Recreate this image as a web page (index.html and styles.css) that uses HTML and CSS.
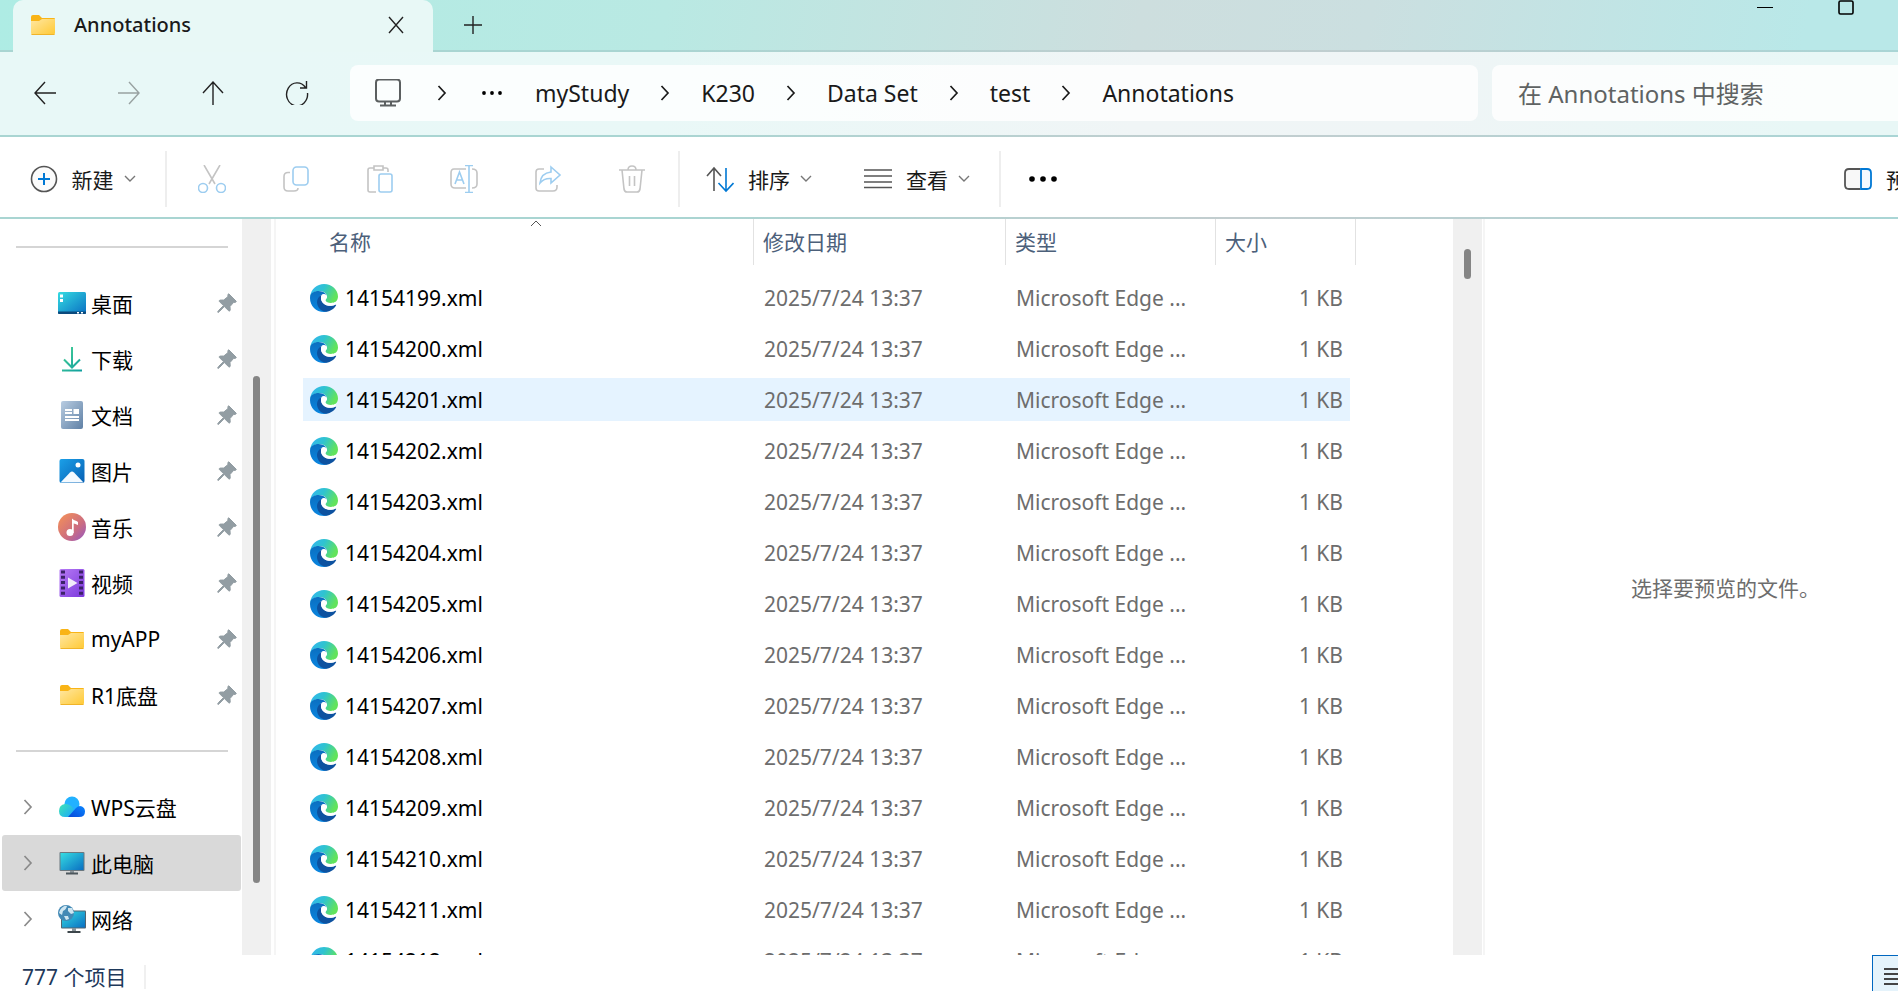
FILE: index.html
```
<!DOCTYPE html>
<html lang="zh-CN">
<head>
  <meta charset="UTF-8">
  <meta name="viewport" content="width=device-width, initial-scale=1.0">
  <title>Annotations</title>
  <link rel="stylesheet" href="styles.css">
</head>
<body>
  <!-- shared icons -->
  <svg class="sprite" width="0" height="0" aria-hidden="true">
    <defs>
      <linearGradient id="gFolder" x1="0" y1="0" x2="1" y2="1"><stop offset="0" stop-color="#ffe7a2"/><stop offset="1" stop-color="#ffc933"/></linearGradient>
      <linearGradient id="gScreen" x1="0" y1="0" x2="1" y2="1"><stop offset="0" stop-color="#35dce2"/><stop offset="1" stop-color="#0a6fc2"/></linearGradient>
      <linearGradient id="gEdgeTop" x1="0" y1="0" x2="1" y2="0.4"><stop offset="0" stop-color="#35b4f5"/><stop offset="0.5" stop-color="#2fc3d0"/><stop offset="1" stop-color="#62e35c"/></linearGradient>
      <linearGradient id="gEdgeMid" x1="0" y1="0" x2="0" y2="1"><stop offset="0" stop-color="#0b6fc0"/><stop offset="1" stop-color="#0a86e0"/></linearGradient>
      <linearGradient id="gDown" x1="0" y1="0" x2="1" y2="1"><stop offset="0" stop-color="#4ad295"/><stop offset="1" stop-color="#0f9f9f"/></linearGradient>
      <linearGradient id="gDoc" x1="0" y1="0" x2="1" y2="1"><stop offset="0" stop-color="#b9cde2"/><stop offset="1" stop-color="#5f80a5"/></linearGradient>
      <linearGradient id="gPic" x1="0" y1="0" x2="1" y2="1"><stop offset="0" stop-color="#1ba0e8"/><stop offset="1" stop-color="#0760b4"/></linearGradient>
      <linearGradient id="gMusic" x1="0" y1="0" x2="1" y2="1"><stop offset="0.1" stop-color="#f08d5c"/><stop offset="0.6" stop-color="#cc6d80"/><stop offset="1" stop-color="#9356c4"/></linearGradient>
      <linearGradient id="gVideo" x1="0" y1="0" x2="1" y2="1"><stop offset="0" stop-color="#b77bf5"/><stop offset="1" stop-color="#7b38dc"/></linearGradient>
      <linearGradient id="gCloud" x1="0" y1="0" x2="1" y2="0.6"><stop offset="0" stop-color="#3fe6b4"/><stop offset="1" stop-color="#1aa5ff"/></linearGradient>
      <linearGradient id="gCloudR" x1="0" y1="1" x2="1" y2="0"><stop offset="0" stop-color="#0647d8"/><stop offset="1" stop-color="#0a86ff"/></linearGradient>
    </defs>
    <symbol id="folder" viewBox="0 0 28 28">
      <path d="M2 6q0-2 2-2h6l3 3h12q1 0 1 1v4H2z" fill="#f9b416"/>
      <path d="M2 10h8l3-2h13v14q0 2-2 2H4q-2 0-2-2z" fill="url(#gFolder)"/>
      <path d="M2.500 23.500h23" stroke="#f0b429" fill="none"/>
    </symbol>
    <symbol id="edge" viewBox="0 0 28 28">
      <path d="M0 13C1 5 7 0 14 0c8 0 14 6 14 12.500 0 4.500-3.500 7-8 7-3 0-6-1-6-3 0-1 3-1 3-4C17 9 13 7 9 7c-4 0-7 2-9 6z" fill="url(#gEdgeTop)"/>
      <path d="M0 14C0 9 4 7 8.500 7c5 0 8.500 3 8.500 6 0-2-2-3-3.500-3C10 11 9 14 9.500 17c1 5 6 9 10.500 9-2 1.300-4 2-6 2C6 28 0 22 0 14z" fill="url(#gEdgeMid)"/>
      <path d="M12 10.500c-3 1.500-5 4.500-5 7.500 0 5 4 9.500 9 9.800 4-.3 8-2.800 10-6.300.5-1-.3-1.200-1-.8-1.500.8-3 1-5 1-5 0-9-3.200-9-7.200 0-1.600.4-2.800 1-4z" fill="#0d52a0"/>
      <path d="M11 13.200c0-2 1.400-3 3-3 1.700 0 3 1.200 3 2.800 0 1.600-1.600 2.200-1.400 3.600.3 1.500 2.700 2.300 5.200 2.300 1.800 0 3.800-.4 5.200-1.200l-.4 3q-2.600 1.300-5.600 1.100c-5 0-9-3.600-9-8.600z" fill="#fff"/>
    </symbol>
    <symbol id="pin" viewBox="0 0 20 20">
      <path d="M12 1l7 7c.6.600 0 1.300-.8 1.300l-1.700.2-3.500 4 .2 3.500c0 1-1 1.300-1.600.7L7.300 13.500 2.500 18.500 1 19.500 .600 19l1-1.600L6.500 12.600 2.500 8.700c-.6-.6-.3-1.500.7-1.600l3.600-.1 4-3.300.2-1.900c.1-.8.500-1.300 1-.8z" fill="#929da3" stroke="#929da3"/>
    </symbol>
    <symbol id="chev" viewBox="0 0 12 16"><path d="M2.500 1l6.500 7-6.500 7" fill="none" stroke="currentColor" stroke-width="1.700"/></symbol>
    <symbol id="chevdown" viewBox="0 0 12 8"><path d="M1 1l5 5 5-5" fill="none" stroke="#777" stroke-width="1.400"/></symbol>
    <symbol id="desktop" viewBox="0 0 28 28"><rect y="3" width="28" height="22" rx="1.500" fill="url(#gScreen)"/><path d="M0 22.500h28V24q0 1-1 1H1q-1 0-1-1z" fill="#0b4a7d"/><path d="M2 5.500h3v3H2zM2 10h3v3H2zM19 23h2v1.500h-2zM23 23h2v1.500h-2z" fill="#fff"/></symbol>
    <symbol id="download" viewBox="0 0 28 28"><path d="M14 2v20M6 14.500l8 8 8-8M4 25.500h20" fill="none" stroke="url(#gDown)" stroke-width="2"/></symbol>
    <symbol id="doc" viewBox="0 0 28 28"><rect x="3" width="22" height="28" rx="2" fill="url(#gDoc)"/><path d="M7 9h7M7 12h7M7 16h14M7 19h14" stroke="#fff" stroke-width="1.800"/><rect x="15.500" y="8" width="5.500" height="5" fill="#fff"/></symbol>
    <symbol id="picture" viewBox="0 0 28 28"><rect x="1.500" y="2" width="25" height="24" rx="2" fill="url(#gPic)"/><path d="M2.500 25.500L12 15.500q2-2 4 0l9.500 10z" fill="#f4faff"/><circle cx="20" cy="8" r="2.500" fill="#fff"/></symbol>
    <symbol id="music" viewBox="0 0 28 28"><circle cx="14" cy="14" r="14" fill="url(#gMusic)"/><circle cx="12" cy="19.500" r="3.500" fill="#fff"/><path d="M14 20V5.500c2 2 4 2 6 3.500v3c-2-1-3-1-4.300-1.500V20z" fill="#fff"/></symbol>
    <symbol id="video" viewBox="0 0 28 28"><rect x="1.500" width="25" height="28" rx="1.500" fill="url(#gVideo)"/><path d="M5 1.500v26M23 1.500v26" stroke="#3c2268" stroke-width="4" stroke-dasharray="3 2.300"/><path d="M10 8.500l9.500 5.500-9.500 5.500z" fill="#f1ecfa"/></symbol>
    <symbol id="cloud" viewBox="0 0 28 28"><circle cx="14" cy="11" r="7.500" fill="#22b1ff"/><path d="M7 24q-6 0-6-6 0-6 6-7 5 0 8 4l6 9z" fill="url(#gCloud)"/><path d="M10 24l8-9q3-3 6-1.500 3 1.500 3 5 0 5.500-6 5.500z" fill="url(#gCloudR)"/></symbol>
    <symbol id="pc" viewBox="0 0 28 28"><rect x="1.500" y="3" width="25" height="19" rx="1" fill="#6b7880"/><rect x="2.500" y="4" width="23" height="17" fill="url(#gScreen)"/><path d="M14 22v3" stroke="#8a949a" stroke-width="4"/><path d="M8 24.500h12" stroke="#4c565c" stroke-width="2"/></symbol>
    <symbol id="network" viewBox="0 0 28 28"><rect x="3" y="5.500" width="25" height="18" rx="1" fill="#52646f"/><rect x="4" y="6.500" width="23" height="16" fill="url(#gScreen)"/><path d="M16 23v4" stroke="#8a949a" stroke-width="4"/><path d="M9.500 27h13" stroke="#3d464b" stroke-width="2"/><circle cx="8" cy="8" r="8" fill="#4389b5"/><path d="M2 5q4-5 7-4-1 4-4 5l-1 4-3-2zM10 3l4 0 2 5-3 1-3-3zM6 11l4 0 1 3-3 1z" fill="#cfe6f1"/></symbol>
  </svg>

  <header class="titlebar">
    <div class="tab">
      <svg class="icon28"><use href="#folder"/></svg>
      <span class="tab-title">Annotations</span>
      <button class="tab-close" aria-label="关闭"><svg width="18" height="18" viewBox="0 0 18 18"><path d="M2 1l14 16M16 1L2 17" class="ink"/></svg></button>
    </div>
    <button class="tab-new" aria-label="新建标签页"><svg width="18" height="18" viewBox="0 0 18 18"><path d="M9 0v18M0 9h18" class="ink"/></svg></button>
    <div class="window-buttons">
      <button aria-label="最小化"><svg width="16" height="16" viewBox="0 0 16 16"><path d="M0 7.500h16" stroke="#000"/></svg></button>
      <button aria-label="最大化"><svg width="16" height="16" viewBox="0 0 16 16"><rect x="1" y="1" width="14" height="13" rx="1.500" fill="none" stroke="#000" stroke-width="1.600"/></svg></button>
    </div>
  </header>

  <nav class="navbar">
    <div class="nav-buttons">
      <button aria-label="后退"><svg width="24" height="24" viewBox="0 0 24 24"><path d="M23 12H2M12 1L2 12l10 11" class="ink"/></svg></button>
      <button aria-label="前进" disabled><svg width="24" height="24" viewBox="0 0 24 24"><path d="M1 12h21M12 1l10 11-10 11" class="ink"/></svg></button>
      <button aria-label="向上"><svg width="24" height="24" viewBox="0 0 24 24"><path d="M12 24V1M2 12L12 1l10 11" class="ink"/></svg></button>
      <button aria-label="刷新"><svg width="24" height="24" viewBox="0 0 24 24"><path d="M20.500 6.500A10.500 11.500 0 1 0 22.500 12M21.500 0v7H15" class="ink"/></svg></button>
    </div>
    <div class="address">
      <svg class="addr-pc" width="28" height="28" viewBox="0 0 28 28"><rect x="2" y="0.500" width="24" height="22" rx="3" fill="none" stroke="#5b5f60" stroke-width="2"/><path d="M11 22v4M17 22v4M6 26.500h16" stroke="#5b5f60" stroke-width="2"/></svg>
      <svg class="sep"><use href="#chev"/></svg>
      <button class="dots" aria-label="更多路径"><svg width="20" height="4" viewBox="0 0 20 4"><circle cx="2" cy="2" r="1.900"/><circle cx="10" cy="2" r="1.900"/><circle cx="18" cy="2" r="1.900"/></svg></button>
      <a href="#">myStudy</a>
      <svg class="sep"><use href="#chev"/></svg>
      <a href="#">K230</a>
      <svg class="sep"><use href="#chev"/></svg>
      <a href="#">Data Set</a>
      <svg class="sep"><use href="#chev"/></svg>
      <a href="#">test</a>
      <svg class="sep"><use href="#chev"/></svg>
      <a href="#">Annotations</a>
    </div>
    <input class="search" type="text" placeholder="在 Annotations 中搜索" aria-label="搜索">
  </nav>

  <div class="toolbar">
    <button class="tool new">
      <svg width="28" height="28" viewBox="0 0 28 28"><circle cx="14" cy="14" r="12.500" fill="#fbfbfb" stroke="#555" stroke-width="1.600"/><path d="M14 8v12M8 14h12" stroke="#0078d4" stroke-width="2"/></svg>
      新建 <svg class="down"><use href="#chevdown"/></svg>
    </button>
    <div class="tool-group">
      <button aria-label="剪切" disabled><svg viewBox="0 0 28 28"><path d="M6 0l11 19M22 0L11 19" class="g"/><circle cx="5" cy="23" r="4.500" class="b"/><circle cx="19" cy="23" r="4.500" class="b" transform="translate(4)"/></svg></button>
      <button aria-label="复制" disabled><svg viewBox="0 0 28 28"><path d="M8 7.500H6Q2 7.500 2 11.500V22q0 4 4 4h6q4 0 4-3" class="g"/><rect x="11" y="2" width="15" height="18" rx="3.500" class="b"/></svg></button>
      <button aria-label="粘贴" disabled><svg viewBox="0 0 28 28"><path d="M8 3H4Q2 3 2 5v20q0 2 2 2h6M17 3h3q2 0 2 2v2M8 1h9v4H8z" class="g"/><rect x="13" y="9" width="13" height="18" rx="2" class="b"/></svg></button>
      <button aria-label="重命名" disabled><svg viewBox="0 0 28 28"><path d="M16 4H4Q1 4 1 8v11q0 4 4 4h11M22 4q5 0 5 4v11q0 4-5 4" class="g"/><path d="M15 0.500h8M15 27.500h8M19 0v28M5 19l4.500-12L14 19M6.500 15h6" class="b"/></svg></button>
      <button aria-label="共享" disabled><svg viewBox="0 0 28 28"><path d="M10 4H5Q2 4 2 7v16q0 3 3 3h14q4 0 4-4v-2" class="g"/><path d="M17 2l9 8-9 8v-4.500q-7-.5-11 4.500 1-10 11-11z" class="b"/></svg></button>
      <button aria-label="删除" disabled><svg viewBox="0 0 28 28"><path d="M1 5h26M4 5l2 19q.5 3 3 3h10q2.500 0 3-3l2-19M10 5q0-4 4-4t4 4M11.500 11v10M16.500 11v10" class="g"/></svg></button>
    </div>
    <div class="tool-group menus">
      <button class="tool">
        <svg width="28" height="28" viewBox="0 0 28 28"><path d="M8 26V3M1 11l7-8 7 8" fill="none" stroke="#555" stroke-width="1.600"/><path d="M20 3v23M12.500 18l7.500 8 7.500-8" fill="none" stroke="#0078d4" stroke-width="1.600"/></svg>
        排序 <svg class="down"><use href="#chevdown"/></svg>
      </button>
      <button class="tool">
        <svg width="28" height="28" viewBox="0 0 28 28"><path d="M0 5h28M0 11h28M0 17h28M0 22.500h28" stroke="#555" stroke-width="1.600"/></svg>
        查看 <svg class="down"><use href="#chevdown"/></svg>
      </button>
    </div>
    <button class="more" aria-label="更多"><svg width="28" height="6" viewBox="0 0 28 6"><circle cx="3" cy="3" r="2.800"/><circle cx="14" cy="3" r="2.800"/><circle cx="25" cy="3" r="2.800"/></svg></button>
    <button class="tool preview-toggle">
      <svg width="28" height="28" viewBox="0 0 28 28"><path d="M16 4H5Q1 4 1 8v12q0 4 4 4h11" fill="#f8f8f8" stroke="#555" stroke-width="1.800"/><path d="M17 4h6q4 0 4 4v12q0 4-4 4h-6z" fill="#f4faff" stroke="#0078d4" stroke-width="1.800"/></svg>
      预览
    </button>
  </div>

  <main class="content">
    <aside class="sidebar">
      <hr>
      <a href="#" class="place"><svg class="icon28"><use href="#desktop"/></svg><span>桌面</span><svg class="pin"><use href="#pin"/></svg></a>
      <a href="#" class="place"><svg class="icon28"><use href="#download"/></svg><span>下载</span><svg class="pin"><use href="#pin"/></svg></a>
      <a href="#" class="place"><svg class="icon28"><use href="#doc"/></svg><span>文档</span><svg class="pin"><use href="#pin"/></svg></a>
      <a href="#" class="place"><svg class="icon28"><use href="#picture"/></svg><span>图片</span><svg class="pin"><use href="#pin"/></svg></a>
      <a href="#" class="place"><svg class="icon28"><use href="#music"/></svg><span>音乐</span><svg class="pin"><use href="#pin"/></svg></a>
      <a href="#" class="place"><svg class="icon28"><use href="#video"/></svg><span>视频</span><svg class="pin"><use href="#pin"/></svg></a>
      <a href="#" class="place"><svg class="icon28"><use href="#folder"/></svg><span>myAPP</span><svg class="pin"><use href="#pin"/></svg></a>
      <a href="#" class="place"><svg class="icon28"><use href="#folder"/></svg><span>R1底盘</span><svg class="pin"><use href="#pin"/></svg></a>
      <hr>
      <a href="#" class="place root"><svg class="expand"><use href="#chev"/></svg><svg class="icon28"><use href="#cloud"/></svg><span>WPS云盘</span></a>
      <a href="#" class="place root selected"><svg class="expand"><use href="#chev"/></svg><svg class="icon28"><use href="#pc"/></svg><span>此电脑</span></a>
      <a href="#" class="place root"><svg class="expand"><use href="#chev"/></svg><svg class="icon28"><use href="#network"/></svg><span>网络</span></a>
    </aside>
    <div class="scrollbar side-scroll"><div class="thumb"></div></div>

    <section class="files">
      <table>
        <thead>
          <tr>
            <th class="name">名称<svg class="sort" width="12" height="7" viewBox="0 0 12 7"><path d="M1 6l5-5 5 5" fill="none" stroke="#555"/></svg></th>
            <th class="date">修改日期</th>
            <th class="type">类型</th>
            <th class="size">大小</th>
          </tr>
        </thead>
        <tbody id="rows"></tbody>
      </table>
    </section>
    <div class="scrollbar file-scroll"><div class="thumb"></div></div>

    <section class="preview">选择要预览的文件。</section>
  </main>

  <footer class="statusbar">
    <span class="count">777 个项目</span>
    <button class="view-details" aria-label="详细信息"><svg width="20" height="20" viewBox="0 0 20 20"><path d="M0 2h20M0 7h20M0 12h20M0 17h20" stroke="#444" stroke-width="2"/></svg></button>
  </footer>

  <script>
    const rows = document.getElementById('rows');
    for (let n = 14154199; n <= 14154212; n++) {
      const tr = document.createElement('tr');
      if (n === 14154201) tr.className = 'hover';
      tr.innerHTML = `
        <td class="name"><div class="file"><svg class="icon28"><use href="#edge"/></svg>${n}.xml</div></td>
        <td class="date">2025/7/24 13:37</td>
        <td class="type">Microsoft Edge ...</td>
        <td class="size">1 KB</td>`;
      rows.appendChild(tr);
    }
  </script>
</body>
</html>
```
FILE: styles.css
```
* { box-sizing: border-box; }
body {
  margin: 0;
  height: 100vh;
  display: flex;
  flex-direction: column;
  overflow: hidden;
  background: #fff;
  color: #1a1a1a;
  font-family: "Noto Sans", "Noto Sans CJK SC", sans-serif;
  font-size: 20px;
}
button {
  display: flex;
  align-items: center;
  justify-content: center;
  padding: 0;
  border: none;
  background: none;
  font: inherit;
  color: inherit;
}
a { color: inherit; text-decoration: none; }
svg { flex: none; display: block; }
.sprite { position: absolute; }
.ink { fill: none; stroke: #222; stroke-width: 1.4; }
.icon28 { width: 28px; height: 28px; }

/* title bar */
.titlebar {
  display: flex;
  height: 52px;
  flex: none;
  padding-left: 13px;
  border-bottom: 2px solid #a9d5d2;
  border-image: linear-gradient(90deg, #a9d5d2 35%, #c3cdcf 65%, #a9d5d5) 1;
  background: linear-gradient(100deg, #aeece4, #b9e9e3 35%, #cddede 60%, #cbdfe0 72%, #b9e8e8 95%);
}
.tab {
  display: flex;
  align-items: center;
  width: 420px;
  height: 52px;
  padding: 0 28px 3px 16px;
  border-radius: 10px 10px 0 0;
  background: #e8f8f6;
}
.tab-title {
  flex: 1;
  margin-left: 17px;
  font-weight: 500;
}
.tab-new { width: 80px; }
.window-buttons {
  display: flex;
  align-items: flex-start;
  margin-left: auto;
  margin-right: 12px;
}
.window-buttons button { width: 81px; }

/* navigation */
.navbar {
  display: flex;
  align-items: center;
  gap: 14px;
  height: 85px;
  flex: none;
  padding: 0 0 2px 3px;
  border-bottom: 2px solid #a9d5d2;
  border-image: linear-gradient(90deg, #a9d5d2 35%, #c3cdcf 65%, #a9d5d5) 1;
  background: linear-gradient(100deg, #e8f8f7 15%, #e9f8f7 35%, #f0f5f6 60%, #eff5f6 75%, #e8f7f6 95%);
}
.nav-buttons {
  display: flex;
  margin-right: -3px;
}
.nav-buttons button { width: 84px; height: 56px; }
.nav-buttons button:disabled { opacity: 0.4; }
.address {
  display: flex;
  align-items: center;
  flex: 1;
  height: 56px;
  padding-left: 24px;
  border-radius: 8px;
  background: rgba(255,255,255,0.8);
  font-size: 23px;
}
.sep { width: 12px; height: 16px; margin: 0 30px; }
.addr-pc + .sep { margin-left: 34px; }
.dots { margin: 0 33px 0 4px; }
.search {
  width: 406px;
  height: 56px;
  padding: 2px 26px 0;
  border: none;
  border-radius: 8px 0 0 8px;
  background: rgba(255,255,255,0.8);
  font: inherit;
  font-size: 24px;
}
.search::placeholder { color: #5f6363; opacity: 1; }

/* toolbar */
.toolbar {
  display: flex;
  align-items: center;
  height: 82px;
  flex: none;
  padding-top: 3px;
  border-bottom: 2px solid #a9d5d2;
  border-image: linear-gradient(90deg, #a9d5d2 35%, #c3cdcf 65%, #a9d5d5) 1;
}
.tool { font-size: 21px; gap: 14px; white-space: nowrap; }
.down { width: 12px; height: 8px; margin-left: -4px; }
.new { width: 165px; height: 56px; }
.tool-group {
  display: flex;
  align-items: center;
  height: 56px;
  padding-left: 3px;
  border-left: 2px solid #eee;
}
.tool-group > button[disabled] { width: 84px; }
.tool-group > button[disabled] svg { width: 28px; height: 28px; }
.g, .b { fill: none; stroke: #c4c4c4; stroke-width: 1.6; }
.b { stroke: #9dcdf0; }
.menus {
  gap: 52px;
  padding: 0 29px 0 26px;
  margin-left: 4px;
  border-right: 2px solid #eee;
}
.more { width: 84px; }
.preview-toggle { margin-left: auto; margin-right: -30px; }

/* content */
.content {
  display: flex;
  flex: 1;
  min-height: 0;
}
.sidebar {
  width: 242px;
  flex: none;
  overflow: hidden;
  color: #000;
}
.sidebar hr {
  height: 2px;
  margin: 27px 14px 27px 16px;
  border: none;
  background: #d5d5d5;
}
.place {
  display: flex;
  align-items: center;
  height: 56px;
  margin: 0 1px 0 2px;
  padding: 0 4px 0 56px;
  border-radius: 3px;
  font-size: 21px;
}
.place span { flex: 1; margin-left: 5px; }
.pin { width: 20px; height: 20px; }
.root { padding-left: 20px; }
.expand { width: 12px; height: 16px; margin-right: 24px; color: #8a8a8a; }
.selected { background: #d9d9d9; }
.scrollbar {
  display: flex;
  justify-content: center;
  width: 29px;
  flex: none;
  background: #f0f0f0;
}
.thumb { width: 7px; border-radius: 4px; background: #858585; }
.side-scroll .thumb { height: 507px; margin-top: 157px; }
.file-scroll .thumb { height: 30px; margin-top: 30px; }

.files {
  flex: 1;
  margin-left: 3px;
  padding-left: 27px;
  border-left: 2px solid #f5f5f5;
  overflow: hidden;
}
table {
  width: 1053px;
  table-layout: fixed;
  border-collapse: separate;
  border-spacing: 0;
}
tbody::before {
  content: "";
  display: block;
  height: 7px;
}
th {
  position: relative;
  height: 46px;
  padding: 0 0 2px 9px;
  border-right: 1px solid #e2e2e2;
  text-align: left;
  font-size: 21px;
  font-weight: normal;
  color: #4c607a;
}
th.name { width: 451px; padding-left: 26px; }
th.date { width: 252px; }
th.type { width: 210px; }
.sort {
  position: absolute;
  top: 1px;
  left: 227px;
}
td {
  height: 51px;
  padding: 0 0 0 10px;
  border: solid transparent;
  border-width: 4px 0;
  background-clip: padding-box;
  font-size: 21px;
  color: #6d6d6d;
  white-space: nowrap;
}
td.name { padding-left: 7px; color: #000; }
td.size {
  padding: 0 7px 0 0;
  border-right-width: 6px;
  text-align: right;
}
.file { display: flex; align-items: center; gap: 7px; }
.hover td { background-color: #e5f3ff; }

.preview {
  display: flex;
  align-items: center;
  width: 415px;
  flex: none;
  padding-left: 146px;
  margin-left: 1px;
  border-left: 2px solid #f5f5f5;
  font-size: 21px;
  color: #6d6d6d;
  white-space: nowrap;
}

/* status bar */
.statusbar {
  display: flex;
  align-items: flex-start;
  height: 36px;
  flex: none;
  padding-left: 22px;
  font-size: 21px;
  color: #1e395b;
}
.count {
  margin-top: 10px;
  padding-right: 17px;
  border-right: 2px solid #f0f0f0;
  line-height: 24px;
}
.view-details {
  width: 26px;
  height: 44px;
  margin-left: auto;
  padding-left: 11px;
  justify-content: flex-start;
  overflow: hidden;
  border: 1px solid #0067c0;
  border-right: none;
  background: #e5f3fb;
}
```
